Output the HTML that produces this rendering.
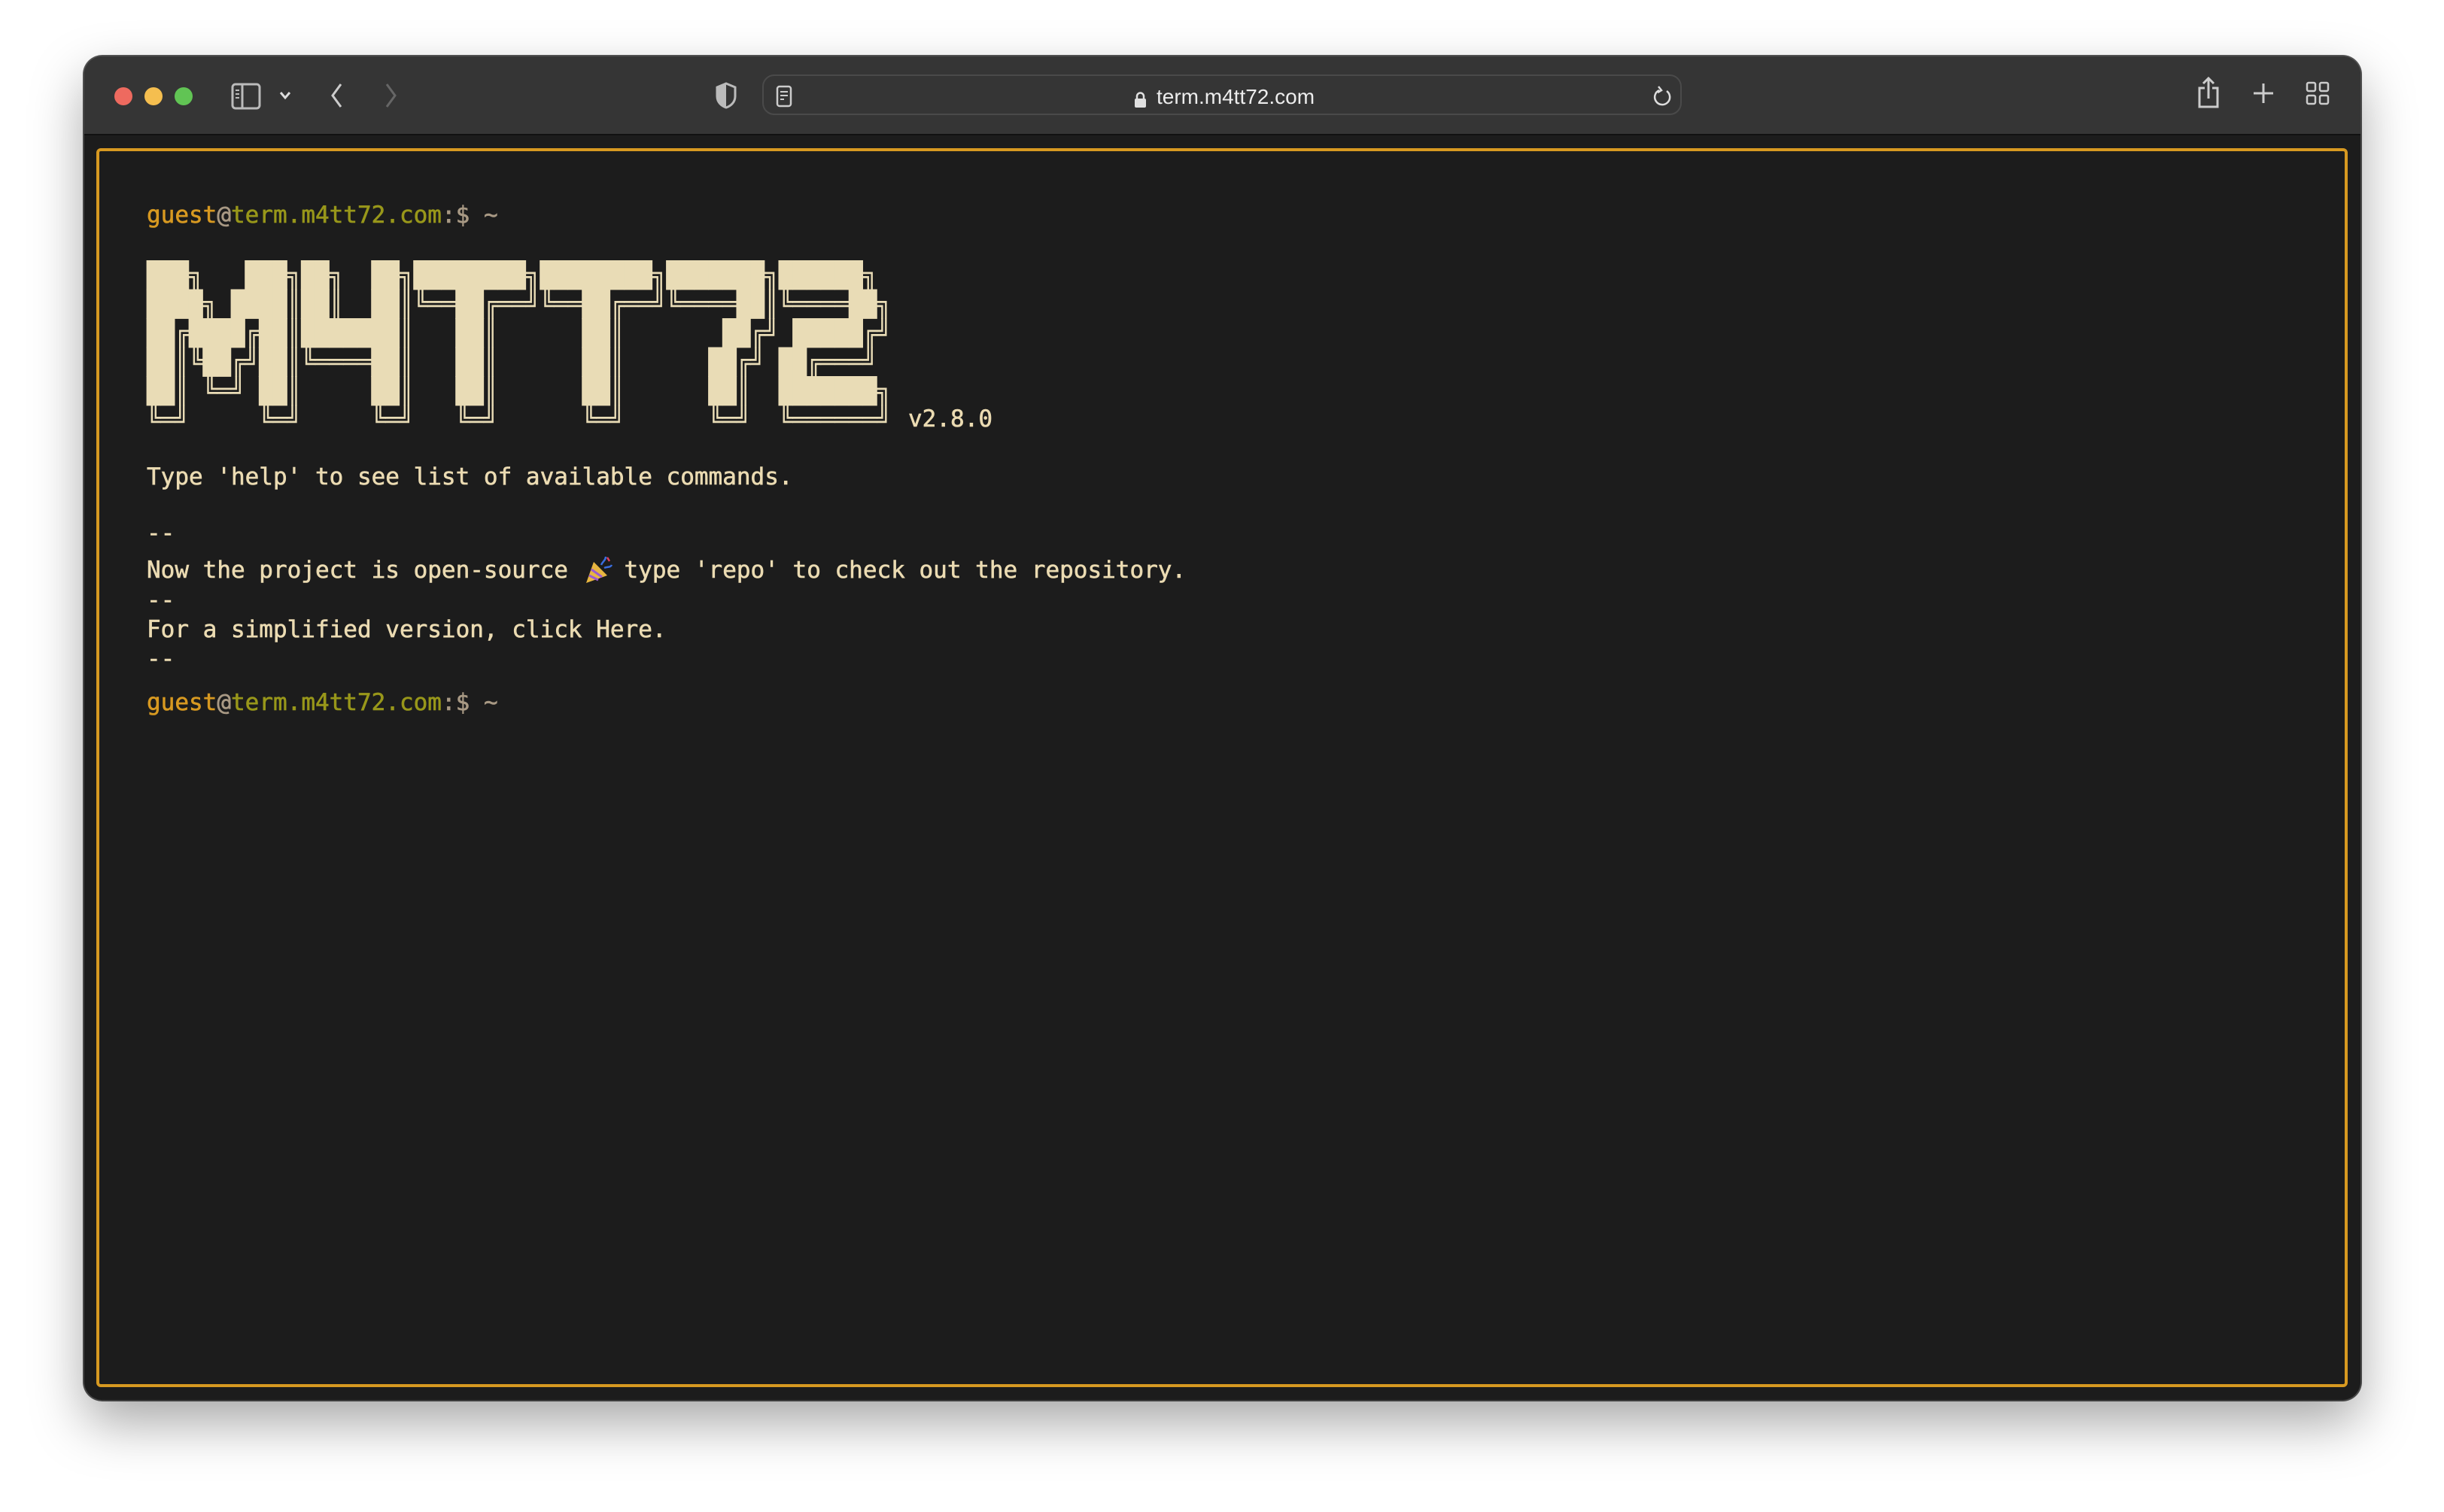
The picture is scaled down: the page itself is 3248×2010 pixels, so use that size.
<!DOCTYPE html>
<html><head><meta charset="utf-8">
<style>
html,body{margin:0;padding:0;width:3248px;height:2010px;background:#fff;overflow:hidden}
.win{position:absolute;left:112px;top:75px;width:3025px;height:1786px;border-radius:24px;background:#1c1c1c;overflow:hidden;box-shadow:0 30px 70px rgba(0,0,0,.35),0 0 0 2px #555}
.bar{position:absolute;left:0;top:0;width:100%;height:103px;background:#353535;border-bottom:2px solid #111}
.dot{position:absolute;top:41px;width:24px;height:24px;border-radius:50%}
.url{position:absolute;left:901px;top:24px;width:1222px;height:54px;border:2px solid #4a4a4a;border-radius:16px;box-sizing:border-box}
.urltext{position:absolute;left:1537px;top:113px;color:#ececec;font:500 28px "Liberation Sans",sans-serif;white-space:nowrap}
.frame{position:absolute;left:16px;top:122px;width:2992px;height:1647px;border:4px solid #d79921;border-radius:6px;box-sizing:border-box}
.t{position:absolute;left:195px;font-family:"DejaVu Sans Mono","Liberation Mono",monospace;font-size:31px;color:#ebdbb2;white-space:pre;line-height:40px;-webkit-text-stroke:0.6px currentColor}
.y{color:#d79921}.g{color:#98971a}.gr{color:#a89984}
pre.art{position:absolute;left:195px;top:347px;margin:0;font-family:"DejaVu Sans Mono",monospace;font-size:31px;line-height:36px;color:#e9dcb6;transform:scaleY(1.07);transform-origin:0 0}
svg{position:absolute}
</style></head><body>
<div class="win">
 <div class="bar">
  <div class="dot" style="left:40px;background:#ee6a5f"></div>
  <div class="dot" style="left:80px;background:#f5be4f"></div>
  <div class="dot" style="left:120px;background:#61c454"></div>
  <svg style="left:195px;top:35px" width="40" height="36" viewBox="0 0 40 36"><rect x="2" y="2" width="36" height="32" rx="4" fill="none" stroke="#bbb" stroke-width="3"/><line x1="15" y1="3" x2="15" y2="33" stroke="#bbb" stroke-width="3"/><path d="M6 10h5M6 15h5M6 20h5" stroke="#bbb" stroke-width="2"/></svg>
  <svg style="left:258px;top:44px" width="18" height="16" viewBox="0 0 18 16"><path d="M3 4l6 7 6-7" fill="none" stroke="#ddd" stroke-width="3"/></svg>
  <svg style="left:325px;top:34px" width="20" height="36" viewBox="0 0 20 36"><path d="M16 3L5 18l11 15" fill="none" stroke="#ccc" stroke-width="3"/></svg>
  <svg style="left:398px;top:34px" width="20" height="36" viewBox="0 0 20 36"><path d="M4 3l11 15L4 33" fill="none" stroke="#666" stroke-width="3"/></svg>
  <svg style="left:838px;top:34px" width="30" height="36" viewBox="0 0 30 36"><path d="M15 2L27 7v12c0 8-6 13-12 15C9 32 3 27 3 19V7z" fill="none" stroke="#bbb" stroke-width="3"/><path d="M15 2L3 7v12c0 8 6 13 12 15z" fill="#bbb"/></svg>
  <div class="url">
   <svg style="left:16px;top:12px" width="22" height="30" viewBox="0 0 22 30"><rect x="2" y="2" width="18" height="26" rx="3" fill="none" stroke="#ccc" stroke-width="2.5"/><path d="M6 9h10M6 14h10M6 19h5" stroke="#ccc" stroke-width="2"/></svg>
   <svg style="left:1180px;top:12px" width="28" height="30" viewBox="0 0 28 30"><path d="M20 8a10 10 0 1 1-10-1" fill="none" stroke="#ddd" stroke-width="2.5"/><path d="M9 2l4 5-5 3" fill="none" stroke="#ddd" stroke-width="2.5"/></svg>
  </div>
  <svg style="left:2808px;top:26px" width="30" height="44" viewBox="0 0 30 44"><path d="M10 16H3v25h24V16h-7" fill="none" stroke="#ccc" stroke-width="3"/><path d="M15 30V3M8 10l7-7 7 7" fill="none" stroke="#ccc" stroke-width="3"/></svg>
  <svg style="left:2881px;top:34px" width="30" height="30" viewBox="0 0 30 30"><path d="M15 2v26M2 15h26" stroke="#ccc" stroke-width="3"/></svg>
  <svg style="left:2952px;top:33px" width="32" height="32" viewBox="0 0 32 32"><g fill="none" stroke="#ccc" stroke-width="2.5"><rect x="2" y="2" width="11" height="11" rx="2"/><rect x="19" y="2" width="11" height="11" rx="2"/><rect x="2" y="19" width="11" height="11" rx="2"/><rect x="19" y="19" width="11" height="11" rx="2"/></g></svg>
 </div>
 <div class="frame"></div>
</div>
<svg style="left:1507px;top:122px" width="17" height="22" viewBox="0 0 17 22"><path d="M4 10V6a4.5 4.5 0 0 1 9 0v4" fill="none" stroke="#e0e0e0" stroke-width="2.5"/><rect x="1" y="9" width="15" height="12" rx="2" fill="#e0e0e0"/></svg>
<div class="urltext">term.m4tt72.com</div>
<div class="t" style="top:266px"><span class="y">guest</span><span class="gr">@</span><span class="g">term.m4tt72.com</span><span class="gr">:$ ~</span></div>
<pre class="art">███╗   ███╗██╗  ██╗████████╗████████╗███████╗██████╗ 
████╗ ████║██║  ██║╚══██╔══╝╚══██╔══╝╚════██║╚════██╗
██╔████╔██║███████║   ██║      ██║       ██╔╝ █████╔╝
██║╚██╔╝██║╚════██║   ██║      ██║      ██╔╝ ██╔═══╝ 
██║ ╚═╝ ██║     ██║   ██║      ██║      ██║  ███████╗
╚═╝     ╚═╝     ╚═╝   ╚═╝      ╚═╝      ╚═╝  ╚══════╝</pre>
<div class="t" style="left:1207px;top:537px">v2.8.0</div>
<div class="t" style="top:614px">Type 'help' to see list of available commands.</div>
<div class="t" style="top:689px">--</div>
<div class="t" style="top:738px">Now the project is open-source    type 'repo' to check out the repository.</div>
<svg style="left:775px;top:737px" width="42" height="42" viewBox="0 0 42 42"><path d="M4 38L14 10l18 18z" fill="#e8b640"/><path d="M8 28l12 6M11 20l14 10" stroke="#9a5ad0" stroke-width="3"/><path d="M24 14c2-5 6-6 6-11M28 18c4-2 8 0 10-4" fill="none" stroke="#3a6ee0" stroke-width="2.5"/><path d="M32 4l3 5" stroke="#e04060" stroke-width="2.5"/></svg>
<div class="t" style="top:778px">--</div>
<div class="t" style="top:817px">For a simplified version, click Here.</div>
<div class="t" style="top:856px">--</div>
<div class="t" style="top:914px"><span class="y">guest</span><span class="gr">@</span><span class="g">term.m4tt72.com</span><span class="gr">:$ ~</span></div>
</body></html>
